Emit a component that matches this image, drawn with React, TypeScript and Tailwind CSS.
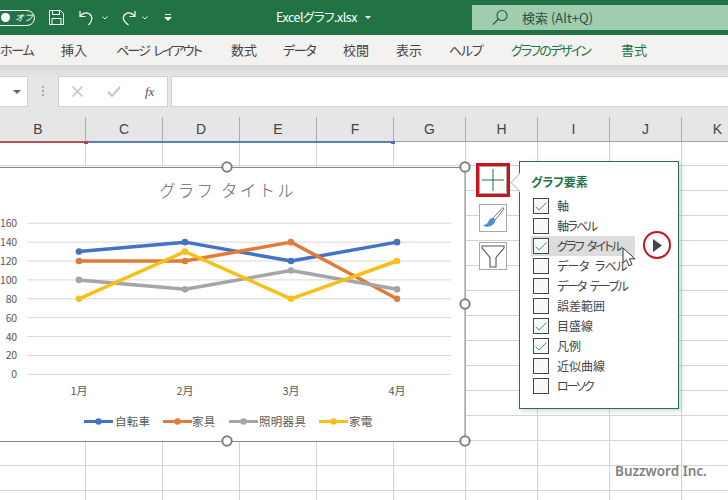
import React from "react";

const font = { fontFamily: '"Noto Sans CJK JP", "Noto Sans", sans-serif' };
const columns = [
  { name: "B", cls: "w-[95px] -ml-[9px]" },
  { name: "C", cls: "w-[77px]" },
  { name: "D", cls: "w-[77px]" },
  { name: "E", cls: "w-[77px]" },
  { name: "F", cls: "w-[77px]" },
  { name: "G", cls: "w-[72px]" },
  { name: "H", cls: "w-[72px]" },
  { name: "I", cls: "w-[72px]" },
  { name: "J", cls: "w-[72px]" },
  { name: "K", cls: "w-[72px]" },
];
const tabs = [
  { t: "ホーム", c: "w-[33px] ml-0 text-[#444] tracking-[-1.300px]" },
  { t: "挿入", c: "w-[26px] ml-[28px] text-[#444]" },
  { t: "ページ レイアウト", c: "w-[85px] ml-[29px] text-[#444] tracking-[-1.800px] [word-spacing:3px]" },
  { t: "数式", c: "w-[26px] ml-[30px] text-[#444]" },
  { t: "データ", c: "w-[32px] ml-[26px] text-[#444] tracking-[-1.300px]" },
  { t: "校閲", c: "w-[26px] ml-[28px] text-[#444]" },
  { t: "表示", c: "w-[26px] ml-[27px] text-[#444]" },
  { t: "ヘルプ", c: "w-[32px] ml-[27px] text-[#444] tracking-[-1.300px]" },
  { t: "グラフのデザイン", c: "w-[80px] ml-[30px] text-[#217346] tracking-[-1.900px]" },
  { t: "書式", c: "w-[26px] ml-[30px] text-[#217346]" },
];
const items = [
  { t: "軸", on: true, c: "" },
  { t: "軸ラベル", on: false, c: "tracking-[-1.600px]" },
  { t: "グラフ タイトル", on: true, hi: true, c: "tracking-[-1.800px] [word-spacing:3px]" },
  { t: "データ ラベル", on: false, c: "tracking-[-0.600px] [word-spacing:4px]" },
  { t: "データ テーブル", on: false, c: "tracking-[-1.600px] [word-spacing:3px]" },
  { t: "誤差範囲", on: false, c: "" },
  { t: "目盛線", on: true, c: "" },
  { t: "凡例", on: true, c: "" },
  { t: "近似曲線", on: false, c: "" },
  { t: "ローソク", on: false, c: "tracking-[-2.200px]" },
];
const xs = [79, 185, 291, 397];
const Y = (v: number) => 207.3 - v * 0.944;
const series = [
  { c: "#4472c4", d: [130, 140, 120, 140] },
  { c: "#e07b39", d: [120, 120, 140, 80] },
  { c: "#a5a5a5", d: [100, 90, 110, 90] },
  { c: "#f5c018", d: [80, 130, 80, 120] },
];
const legend = [
  { c: "#4472c4", t: "自転車", x: 84, tx: 115 },
  { c: "#e07b39", t: "家具", x: 163, tx: 192 },
  { c: "#a5a5a5", t: "照明器具", x: 229, tx: 259 },
  { c: "#f5c018", t: "家電", x: 319, tx: 349 },
];
const handles: [number, number][] = [
  [227, 167],
  [465, 167],
  [465, 304],
  [227, 441],
  [465, 441],
];

function Handle({ x, y }: { x: number; y: number }) {
  return <circle cx={x} cy={y} r={4.7} fill="#fff" stroke="#808080" strokeWidth={2} />;
}

export default function App() {
  return (
    <div className="relative w-[728px] h-[500px] overflow-hidden bg-white flex flex-col" style={font}>
      {/* Title bar */}
      <div className="h-[35px] bg-[#217346] flex items-center relative shrink-0 text-white">
        <div className="w-[46px] h-[16px] -ml-[11px] rounded-full border border-white flex items-center pl-[11px] gap-[5px]">
          <span className="w-[9px] h-[9px] rounded-full bg-white" />
          <span className="text-[9px] italic leading-none">オフ</span>
        </div>
        <svg className="ml-[13px]" width="17" height="17" viewBox="0 0 17 17" fill="none" stroke="#fff" strokeWidth="1">
          <path d="M1.500 1.500h11l3 3v11h-14z" />
          <path d="M4.500 1.500v4h7v-4M4 15.500v-6h9v6" />
        </svg>
        <svg className="ml-[13px]" width="18" height="18" viewBox="0 0 18 18" fill="none" stroke="#fff" strokeWidth="1.200">
          <path d="M2 2v5.500h5.500M2.500 7c2-3 6-4 9-2 3.500 2.500 3 7-1 11" />
        </svg>
        <svg className="ml-[6px]" width="6" height="4" viewBox="0 0 6 4" fill="none" stroke="#fff"><path d="M.5.5 3 3 5.500.5" /></svg>
        <svg className="ml-[11px]" width="18" height="18" viewBox="0 0 18 18" fill="none" stroke="#fff" strokeWidth="1.200">
          <path d="M16 2v5.500h-5.500M15.500 7c-2-3-6-4-9-2-3.500 2.500-3 7 3 11" />
        </svg>
        <svg className="ml-[5px]" width="6" height="4" viewBox="0 0 6 4" fill="none" stroke="#fff"><path d="M.5.5 3 3 5.500.5" /></svg>
        <svg className="ml-[16px]" width="8" height="7" viewBox="0 0 8 7" fill="#fff"><path d="M1 0h6v1H1zM0 3h8L4 7z" /></svg>
        <span className="ml-[104px] w-[83px] text-[12.500px] tracking-[-0.500px] [font-feature-settings:'palt'] whitespace-nowrap">Excelグラフ.xlsx</span>
        <svg className="ml-[6px]" width="6" height="3" viewBox="0 0 6 3" fill="#fff"><path d="M0 0h6L3 3z" /></svg>
        <div className="absolute left-[472px] top-[5px] w-[256px] h-[25px] bg-[#a0ccb0] flex items-center pl-[20px] text-[#2f4f3c]">
          <svg width="16" height="17" viewBox="0 0 16 17" fill="none" stroke="#1f5c3a" strokeWidth="1.100">
            <circle cx="10" cy="6.500" r="5" />
            <path d="M6.500 10 1 15.500" />
          </svg>
          <span className="ml-[14px] text-[13px] whitespace-nowrap">検索 (Alt+Q)</span>
        </div>
      </div>

      {/* Ribbon tabs */}
      <div className="h-[30px] bg-[#f3f2f1] flex items-center shrink-0 text-[13px] [font-feature-settings:'palt'] whitespace-nowrap">
        {tabs.map((t) => (
          <span key={t.t} className={t.c}>{t.t}</span>
        ))}
      </div>

      {/* Formula bar */}
      <div className="h-[52px] shrink-0 bg-[linear-gradient(#d4d4d4,#e6e6e6_11px)] pt-[11px] pb-[11px] flex">
        <div className="w-[28px] h-[31px] bg-white border border-[#cfcfcf] border-l-0 flex items-center justify-end pr-[6px]">
          <svg width="8" height="4" viewBox="0 0 8 4" fill="#666"><path d="M0 0h8L4 4z" /></svg>
        </div>
        <div className="w-[30px] flex flex-col items-center justify-center gap-[2px]">
          <span className="w-[2px] h-[2px] bg-[#aaa]" />
          <span className="w-[2px] h-[2px] bg-[#aaa]" />
          <span className="w-[2px] h-[2px] bg-[#aaa]" />
        </div>
        <div className="w-[110px] h-[31px] bg-white border border-[#cfcfcf] flex items-center relative">
          <svg className="ml-[13px]" width="11" height="11" viewBox="0 0 11 11" stroke="#c4c4c4" strokeWidth="1.500"><path d="M.5.5l10 10M10.500.5l-10 10" /></svg>
          <svg className="ml-[24px]" width="14" height="11" viewBox="0 0 14 11" fill="none" stroke="#c4c4c4" strokeWidth="2"><path d="M1 6l4 4 8-9" /></svg>
          <span className="ml-[24px] text-[13px] italic text-[#555]" style={{ fontFamily: '"Liberation Serif", serif' }}>fx</span>
        </div>
        <div className="ml-[3px] flex-1 h-[31px] bg-white border border-[#cfcfcf] border-r-0" />
      </div>

      {/* Column headers */}
      <div className="h-[25px] shrink-0 flex bg-[#e6e6e6] border-b border-[#a0a0a0] text-[14px] text-[#444]">
        {columns.map((c) => (
          <div key={c.name} className={`${c.cls} shrink-0 border-r border-[#ababab] flex items-center justify-center`} style={{ fontFamily: '"Liberation Sans", sans-serif' }}>
            {c.name}
          </div>
        ))}
      </div>

      {/* Sheet */}
      <div className="relative flex-1 flex flex-col">
        <div className="h-[24px] flex shrink-0">
          {columns.map((c) => (
            <div key={c.name} className={`${c.cls} shrink-0 border-r border-b border-[#d4d4d4]`} />
          ))}
        </div>
        {Array.from({ length: 14 }).map((_, r) => (
          <div key={r} className="h-[25px] flex shrink-0">
            {columns.map((c) => (
              <div key={c.name} className={`${c.cls} shrink-0 border-r border-b border-[#d4d4d4]`} />
            ))}
          </div>
        ))}
      </div>

      {/* Range highlight under the column headers */}
      <div className="absolute left-0 top-[141px] w-[85px] h-[2px] bg-[#b5525c]" />
      <div className="absolute left-[84px] top-[141px] w-[4px] h-[3px] bg-[#c0394a]" />
      <div className="absolute left-[88px] top-[141px] w-[305px] h-[2px] bg-[#5b7fb5]" />
      <div className="absolute left-[391px] top-[141px] w-[4px] h-[3px] bg-[#4472c4]" />

      {/* Chart */}
      <svg className="absolute left-0 top-0" width="728" height="500" viewBox="0 0 728 500" style={{ pointerEvents: "none" }}>
        <rect x="-10" y="167.500" width="475" height="274" fill="#fff" stroke="#868686" />
        <g transform="translate(0,167)">
          {[0, 20, 40, 60, 80, 100, 120, 140, 160].map((v) => (
            <g key={v}>
              <line x1="27" x2="451" y1={Y(v)} y2={Y(v)} stroke="#d9d9d9" />
              <text x="17" y={Y(v) + 4} textAnchor="end" fontSize="10.500" letterSpacing="-0.200" fill="#595959">{v}</text>
            </g>
          ))}
          {series.map((s) => (
            <g key={s.c}>
              <polyline
                points={s.d.map((v, i) => `${xs[i]},${Y(v)}`).join(" ")}
                fill="none"
                stroke={s.c}
                strokeWidth="3.500"
                strokeLinejoin="round"
              />
              {s.d.map((v, i) => (
                <circle key={i} cx={xs[i]} cy={Y(v)} r="3.300" fill={s.c} />
              ))}
            </g>
          ))}
          {["1月", "2月", "3月", "4月"].map((m, i) => (
            <text key={m} x={xs[i]} y={228} textAnchor="middle" fontSize="11" fill="#595959">{m}</text>
          ))}
        </g>
        <text x="227.500" y="197" textAnchor="middle" fontSize="16.500" fontWeight="300" fill="#666666" letterSpacing="2.200">グラフ タイトル</text>
        {legend.map((l) => (
          <g key={l.t}>
            <line x1={l.x} x2={l.x + 29} y1="421.500" y2="421.500" stroke={l.c} strokeWidth="3" />
            <circle cx={l.x + 14.500} cy="421.500" r="3.200" fill={l.c} />
            <text x={l.tx} y="425.500" fontSize="11.500" fill="#595959" letterSpacing="0.300">{l.t}</text>
          </g>
        ))}
        {handles.map(([x, y]) => (
          <Handle key={`${x}-${y}`} x={x} y={y} />
        ))}
      </svg>

      {/* Chart side buttons */}
      <div className="absolute left-[476px] top-[163px] w-[34px] h-[34px] border-[3px] border-[#c8141e] bg-white flex items-center justify-center">
        <div className="w-[28px] h-[28px] border border-[#a8a8a8] flex items-center justify-center">
          <svg width="22" height="22" viewBox="0 0 22 22" stroke="#217346" strokeWidth="1"><path d="M11 0v22M0 11h22" /></svg>
        </div>
      </div>
      <div className="absolute left-[479px] top-[204px] w-[28px] h-[28px] border border-[#a8a8a8] bg-white flex items-center justify-center">
        <svg width="24" height="24" viewBox="0 0 24 24">
          <path d="M22 1.500 12 12l2 2L23 3z" fill="#fff" stroke="#666" strokeWidth="0.900" />
          <path d="M11.500 12c-3 0-3.500 3-5 5-1 1.300-3 2-4.500 2.500 3 2 8 1.500 10.500-1.500 1.500-2 2-3.500 1.500-4z" fill="#4a90d9" />
        </svg>
      </div>
      <div className="absolute left-[479px] top-[242px] w-[28px] h-[28px] border border-[#a8a8a8] bg-white flex items-center justify-center">
        <svg width="24" height="25" viewBox="0 0 24 25" fill="none" stroke="#555" strokeWidth="1.100">
          <path d="M1 2h22v2L15 13.500V23H9v-9.500L1 4z" />
        </svg>
      </div>

      {/* Chart elements flyout */}
      <div className="absolute left-[519px] top-[161px] w-[160px] h-[248px] bg-white border border-[#2f6b4f] shadow-[2px_2px_5px_rgba(33,115,70,0.25)] pt-[11px] pl-[11px] [font-feature-settings:'palt']">
        <div className="absolute -left-[7px] top-[14px] w-[13px] h-[13px] bg-white border-l border-b border-[#b8c8be] rotate-45" />
        <div className="text-[12px] font-bold text-[#217346] leading-[18px] mb-[5px] relative">グラフ要素</div>
        <div className="flex flex-col">
          {items.map((it) => (
            <div
              key={it.t}
              className={`h-[20px] w-[104px] flex items-center pl-[2px] gap-[8px] text-[12px] text-[#444] whitespace-nowrap ${it.hi ? "bg-[#dcdcdc]" : ""}`}
            >
              <span className="w-[16px] h-[16px] border border-[#444] bg-[#f8f8fb] flex items-center justify-center shrink-0">
                {it.on && (
                  <svg width="12" height="9" viewBox="0 0 12 9" fill="none" stroke="#35a560" strokeWidth="1"><path d="M.5 4.500l3.500 3.500 7.500-7.500" /></svg>
                )}
              </span>
              <span className={it.c}>{it.t}</span>
            </div>
          ))}
        </div>
        {/* Red callout on the arrow */}
        <div className="absolute left-[123px] top-[69px] w-[28px] h-[28px] rounded-full border-2 border-[#c8141e] bg-white flex items-center justify-center">
          <svg width="9" height="13" viewBox="0 0 9 13" fill="#444"><path d="M0 0l9 6.500L0 13z" /></svg>
        </div>
      </div>

      {/* Mouse cursor */}
      <svg className="absolute left-[622px] top-[247px]" width="15" height="21" viewBox="0 0 15 21">
        <path d="M1 1v15l3.500-3.200 2.500 6 3-1.300-2.500-5.700H13z" fill="#fff" stroke="#333" strokeWidth="1" />
      </svg>

      {/* Watermark */}
      <div className="absolute left-[615px] top-[461px] text-[13.500px] font-semibold text-[#808080] whitespace-nowrap" style={{ fontFamily: '"Noto Sans", sans-serif' }}>
        Buzzword Inc.
      </div>
    </div>
  );
}
